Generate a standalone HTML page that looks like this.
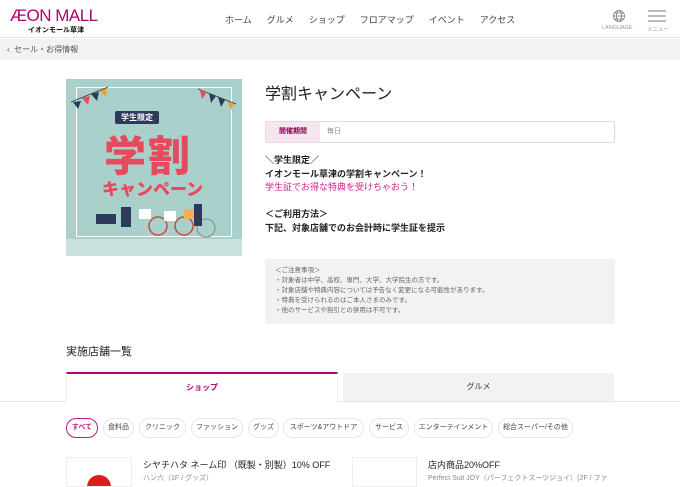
<!DOCTYPE html>
<html><head><meta charset="utf-8"><style>
*{margin:0;padding:0;box-sizing:border-box}
body{width:680px;height:480px;overflow:hidden;background:#fff;font-family:"Liberation Sans","Noto Sans CJK JP",sans-serif;color:#333;position:relative}
.a{position:absolute;white-space:nowrap}
.chip{position:absolute;top:418px;height:20px;border:1px solid #e6e6e6;border-radius:10px;font-size:7px;line-height:18px;text-align:center;color:#444}
</style></head><body>
<div class="a" style="left:0;top:0;width:680px;height:38px;background:#fff;border-bottom:1px solid #e8e8e8"></div>
<div class="a" style="left:10px;top:6px;font-size:17px;color:#b0006f;letter-spacing:-0.5px">ÆON MALL</div>
<div class="a" style="left:28px;top:25px;font-size:7px;font-weight:bold;color:#111">イオンモール草津</div>
<div class="a" style="left:225px;top:13px;font-size:9px;color:#444;word-spacing:5px">ホーム&nbsp; グルメ&nbsp; ショップ&nbsp; フロアマップ&nbsp; イベント&nbsp; アクセス</div>
<svg class="a" style="left:612px;top:9px" width="14" height="14" viewBox="0 0 14 14" fill="none" stroke="#777" stroke-width="0.8"><circle cx="7" cy="7" r="5.5"/><ellipse cx="7" cy="7" rx="2.5" ry="5.5"/><path d="M1.5 7h11M2.5 4h9M2.5 10h9"/></svg>
<div class="a" style="left:602px;top:25px;font-size:5.5px;color:#999">LANGUAGE</div>
<svg class="a" style="left:648px;top:10px" width="18" height="12"><path d="M0 1h18M0 6h18M0 11h18" stroke="#777" stroke-width="1"/></svg>
<div class="a" style="left:647px;top:25px;font-size:5.5px;color:#999">メニュー</div>
<div class="a" style="left:0;top:39px;width:680px;height:21px;background:#f2f2f2"></div>
<div class="a" style="left:7px;top:44px;font-size:8px;color:#555">‹&nbsp; セール・お得情報</div>

<div class="a" style="left:66px;top:79px;width:176px;height:177px;background:#a9d0cb;overflow:hidden">
 <div class="a" style="left:10px;top:8px;width:156px;height:150px;border:1px solid #fff"></div>
 <svg class="a" style="left:0;top:0" width="176" height="177">
  <path d="M5 23 L42 8" stroke="#333" stroke-width="0.7"/><polygon points="7,23 15,22 12,30" fill="#2d3a5c"/><polygon points="16,19 24,17 22,26" fill="#e64a5c"/><polygon points="25,15 33,13 31,22" fill="#2d3a5c"/><polygon points="34,12 41,9 40,18" fill="#f0a030"/>
  <path d="M132 10 L170 25" stroke="#333" stroke-width="0.7"/><polygon points="134,11 141,13 136,20" fill="#e64a5c"/><polygon points="143,14 150,17 145,24" fill="#2d3a5c"/><polygon points="152,18 159,21 155,28" fill="#2d3a5c"/><polygon points="161,22 168,25 165,31" fill="#f0a030"/>
  <rect x="0" y="160" width="176" height="17" fill="#c9e2de"/>
  <circle cx="92" cy="147" r="9" fill="none" stroke="#c0503c" stroke-width="1.5"/><circle cx="118" cy="147" r="9" fill="none" stroke="#c0503c" stroke-width="1.5"/><circle cx="140" cy="149" r="9" fill="none" stroke="#999" stroke-width="1.5"/>
  <g fill="#2d3a5c"><rect x="30" y="135" width="20" height="10"/><rect x="55" y="128" width="10" height="20"/><rect x="128" y="125" width="8" height="22"/></g>
  <g fill="#fff"><rect x="73" y="130" width="12" height="10"/><rect x="98" y="132" width="12" height="10"/></g>
  <rect x="118" y="130" width="10" height="10" fill="#f0b060"/>
 </svg>
 <div class="a" style="left:49px;top:32px;background:#2d3a5c;color:#fff;font-size:8px;font-weight:bold;padding:1px 6px;border-radius:2px">学生限定</div>
 <div class="a" style="left:38px;top:44px;font-size:42px;font-weight:900;color:#e64a5c;letter-spacing:2px">学割</div>
 <div class="a" style="left:36px;top:96px;font-size:17px;font-weight:900;color:#e64a5c">キャンペーン</div>
</div>

<div class="a" style="left:265px;top:80px;font-size:16px;color:#222">学割キャンペーン</div>
<div class="a" style="left:265px;top:121px;width:350px;height:22px;border:1px solid #ecd6e3;border-radius:2px"></div>
<div class="a" style="left:266px;top:122px;width:54px;height:20px;background:#f7e6f0;font-size:7px;font-weight:bold;color:#8a0050;text-align:center;line-height:20px">開催期間</div>
<div class="a" style="left:327px;top:122px;font-size:7px;line-height:20px;color:#888">毎日</div>
<div class="a" style="left:265px;top:154px;font-size:9px;line-height:13.5px;color:#222;font-weight:bold">＼学生限定／<br>イオンモール草津の学割キャンペーン！<br><span style="color:#d0208e;font-weight:normal">学生証でお得な特典を受けちゃおう！</span><br><br>＜ご利用方法＞<br>下記、対象店舗でのお会計時に学生証を提示</div>
<div class="a" style="left:265px;top:259px;width:350px;height:65px;background:#f2f2f2"></div>
<div class="a" style="left:275px;top:266px;font-size:6.5px;line-height:10px;color:#666">＜ご注意事項＞<br>・対象者は中学、高校、専門、大学、大学院生の方です。<br>・対象店舗や特典内容については予告なく変更になる可能性があります。<br>・特典を受けられるのはご本人さまのみです。<br>・他のサービスや割引との併用は不可です。</div>

<div class="a" style="left:66px;top:343px;font-size:11px;color:#222">実施店舗一覧</div>
<div class="a" style="left:0;top:401px;width:680px;height:1px;background:#e6e6e6"></div>
<div class="a" style="left:66px;top:372px;width:272px;height:30px;background:#fff;border-top:2px solid #b5007a;border-left:1px solid #eee;border-right:1px solid #eee;font-size:8px;font-weight:bold;color:#b5007a;text-align:center;line-height:27px">ショップ</div>
<div class="a" style="left:343px;top:373px;width:271px;height:28px;background:#f2f2f2;font-size:8px;color:#333;text-align:center;line-height:28px">グルメ</div>

<div class="chip" style="left:66px;width:32px;border-color:#c2188a;color:#c2188a;font-weight:bold">すべて</div>
<div class="chip" style="left:103px;width:31px">食料品</div>
<div class="chip" style="left:139px;width:47px">クリニック</div>
<div class="chip" style="left:191px;width:52px">ファッション</div>
<div class="chip" style="left:248px;width:31px">グッズ</div>
<div class="chip" style="left:283px;width:81px">スポーツ&amp;アウトドア</div>
<div class="chip" style="left:369px;width:40px">サービス</div>
<div class="chip" style="left:414px;width:79px">エンターテインメント</div>
<div class="chip" style="left:498px;width:75px">総合スーパー/その他</div>

<div class="a" style="left:66px;top:457px;width:66px;height:30px;border:1px solid #eee;overflow:hidden"><div class="a" style="left:20px;top:17px;width:24px;height:24px;border-radius:50%;background:#d81e1e"></div></div>
<div class="a" style="left:143px;top:458px;font-size:9px;color:#222">シヤチハタ ネーム印 （既製・別製）10% OFF</div>
<div class="a" style="left:143px;top:473px;font-size:7px;color:#888">ハン六（1F / グッズ）</div>
<div class="a" style="left:352px;top:457px;width:65px;height:30px;border:1px solid #eee"></div>
<div class="a" style="left:428px;top:458px;font-size:9px;color:#222">店内商品20%OFF</div>
<div class="a" style="left:428px;top:473px;font-size:7px;color:#888">Perfect Suit JOY（パーフェクトスーツジョイ）(2F / ファ</div>
</body></html>
